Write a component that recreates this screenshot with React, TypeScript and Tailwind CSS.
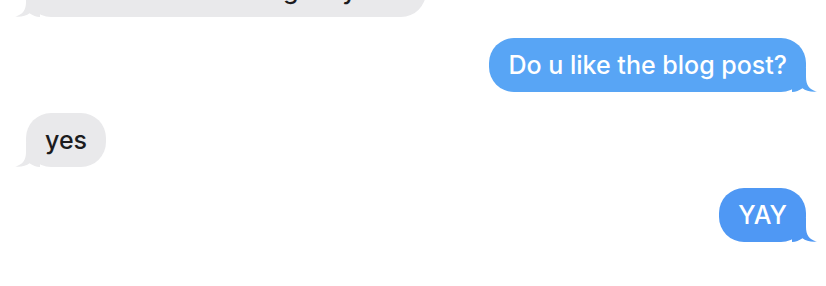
const MESSAGES = [
  { id: 1, from: "them", text: "Wrote about iMessage style bubbles", first: true },
  { id: 2, from: "me", text: "Do u like the blog post?", color: "#58a5f5" },
  { id: 3, from: "them", text: "yes" },
  { id: 4, from: "me", text: "YAY", color: "#4f98f4" },
];

function Tail({ color, side }: { color: string; side: "left" | "right" }) {
  return (
    <svg
      width="26"
      height="26"
      viewBox="0 0 26 26"
      className={side === "right" ? "absolute -right-[12px] bottom-0" : "absolute -left-[12px] bottom-0 -scale-x-100"}
    >
      <path
        d="M0,2 L14,2 L14,11 C14,19 17,23.5 25,25.6 C19,26.3 13.5,24.6 10.5,22.2 C7,24.6 4,26 0,26 Z"
        fill={color}
      />
    </svg>
  );
}

export default function App() {
  return (
    <div className="w-[826px] h-[286px] overflow-hidden bg-white font-['Inter','Liberation_Sans',sans-serif]">
      <div className="flex flex-col gap-[21px] pl-[26px] pr-[20px] -mt-[37px]">
        {MESSAGES.map((m) =>
          m.from === "me" ? (
            <div key={m.id} className="flex justify-end">
              <div
                className="relative whitespace-nowrap rounded-[25px] px-[19px] py-[12px] text-[25px] font-[450] leading-[30px] text-white"
                style={{ backgroundColor: m.color }}
              >
                <span className="relative z-10">{m.text}</span>
                <Tail color={m.color!} side="right" />
              </div>
            </div>
          ) : (
            <div key={m.id} className="flex justify-start">
              <div
                className={
                  "relative whitespace-nowrap rounded-[25px] bg-[#e9e9eb] px-[19px] py-[12px] text-[25px] font-[450] leading-[30px] text-[#1c1c1e]" +
                  (m.first ? " w-[400px]" : "")
                }
              >
                <span className="relative z-10">{m.text}</span>
                <Tail color="#e9e9eb" side="left" />
              </div>
            </div>
          )
        )}
      </div>
    </div>
  );
}
